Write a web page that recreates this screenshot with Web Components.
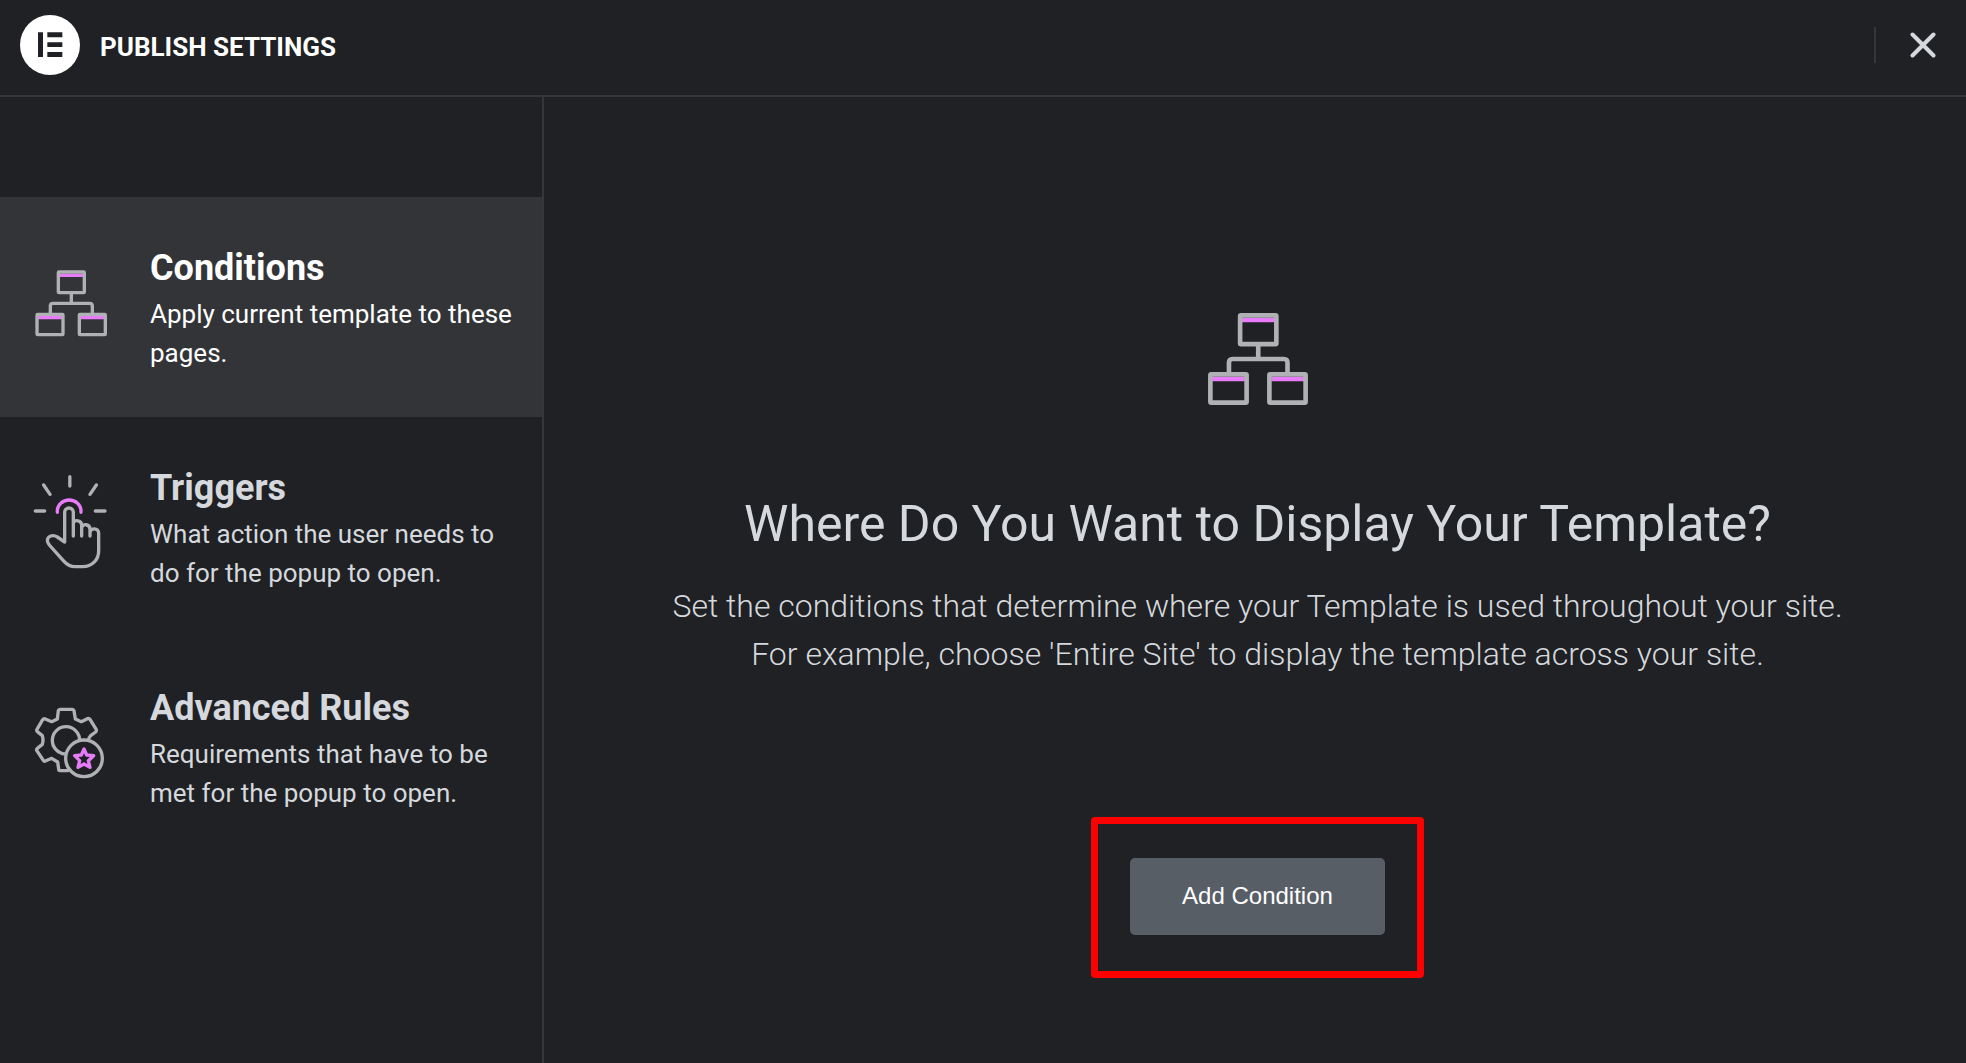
<!DOCTYPE html>
<html lang="en">
<head>
<meta charset="utf-8">
<meta name="viewport" content="width=device-width, initial-scale=1">
<title>Publish Settings</title>
<style>
  body {
    margin: 0;
    background-color: #1f2124;
    color: #d5d8dc;
    font-family: Roboto, "Liberation Sans", sans-serif;
  }
</style>
</head>
<body>

<publish-modal>
  <publish-header slot="header">Publish Settings</publish-header>

  <publish-tab slot="tabs" icon="conditions" active>
    <span slot="title">Conditions</span>
    Apply current template to these pages.
  </publish-tab>
  <publish-tab slot="tabs" icon="triggers">
    <span slot="title">Triggers</span>
    What action the user needs to do for the popup to open.
  </publish-tab>
  <publish-tab slot="tabs" icon="rules">
    <span slot="title">Advanced Rules</span>
    Requirements that have to be met for the popup to open.
  </publish-tab>

  <conditions-panel>
    <span slot="title">Where Do You Want to Display Your Template?</span>
    Set the conditions that determine where your Template is used throughout your site.
    For example, choose 'Entire Site' to display the template across your site.
    <span slot="action">Add Condition</span>
  </conditions-panel>
</publish-modal>

<script>
const conditionsShape = `
  <path class="accent square" d="M118 61H190M54 188H126M182 188H254"/>
  <rect x="115" y="51" width="78" height="62" rx="2"/>
  <rect x="51" y="178" width="78" height="61" rx="2"/>
  <rect x="178" y="178" width="78" height="61" rx="2"/>
  <path d="M154 114V145M91 176V153Q91 145 99 145H209Q217 145 217 153V176"/>
`;

const icons = {
  conditions: {
    viewBox: '0 -24 300 360',
    shape: conditionsShape
  },
  conditionsLarge: {
    viewBox: '46 46 215 198',
    shape: conditionsShape
  },
  triggers: {
    viewBox: '0 21 300 360',
    shape: `
      <path d="M149.500 50V78M71 75L90 103M229 75L210 103M46 153H74M226 153H255"/>
      <path class="accent" d="M112 157V153A35.500 33 0 0 1 183 153V157"/>
      <path d="M160 228V157A13 13 0 0 0 134 157V246L112 231C98 222 83 229 82 241C82 246 84 250 88 255L132 304C143 316 152 320 165 320H188C216 320 236 300 236 272V219C236 203 212 203 210 217V228M185 228V203C188 189 210 192 210 208V217M160 189C164 178 185 180 185 196V204"/>
    `
  },
  rules: {
    viewBox: '0 -24 300 360',
    shape: `
      <path d="M143 227H120Q116 227 116 222L113 201L95 190L76 198Q72 200 70 196L50 166Q49 162 52 160L67 148Q71 135 67 122L52 110Q49 107 51 103L68 74Q71 70 76 72L95 80L112 72L115 47Q116 43 120 43H157Q161 43 162 47L166 72L184 80L202 71Q207 69 210 73L229 104Q230 108 227 111L212 122Q207 127 205 136"/>
      <path d="M179 136A41 41 0 1 0 135 177"/>
      <circle cx="192" cy="190" r="55"/>
      <path class="accent" d="M192 162L200 180L221 182L205 197L210 217L192 207L174 217L179 197L164 182L184 180Z"/>
    `
  }
};

class PublishIcon extends HTMLElement {

  connectedCallback() {
    const { viewBox, shape } = icons[this.getAttribute('name')];

    this.attachShadow({ mode: 'open' });
    this.shadowRoot.innerHTML = `
      <style>
        :host {
          display: block;
          flex: none;
        }

        svg {
          display: block;
          width: 100%;
          height: 100%;
          fill: none;
          stroke: #afb1b4;
          stroke-width: 10;
          stroke-linecap: round;
          stroke-linejoin: round;
        }

        .accent {
          stroke: #e77bf8;
        }

        .square {
          stroke-linecap: butt;
        }
      </style>
      <svg viewBox="${viewBox}" aria-hidden="true">${shape}</svg>
    `;
  }
}

class PublishHeader extends HTMLElement {

  constructor() {
    super();
    this.attachShadow({ mode: 'open' });
    this.shadowRoot.innerHTML = `
      <style>
        :host {
          display: flex;
          align-items: flex-start;
          padding: 15px 20px 16px;
          border-bottom: 2px solid #35363a;
        }

        .logo {
          width: 60px;
          height: 60px;
          margin-right: 20px;
        }

        h1 {
          flex: 1;
          margin: 0;
          color: #fff;
          font-size: 26px;
          font-weight: 700;
          line-height: 64px;
          text-transform: uppercase;
        }

        .close {
          display: flex;
          align-items: center;
          height: 36px;
          margin-top: 12px;
          padding: 0 10px 0 34px;
          border: 0;
          border-left: 2px solid #35363a;
          background: none;
          cursor: pointer;
        }

        .close svg {
          width: 26px;
          height: 26px;
        }
      </style>

      <svg class="logo" viewBox="60 45 180 180" aria-hidden="true">
        <circle cx="150" cy="135" r="90" fill="#fff"/>
        <path fill="#1f2124" d="M114 97h15v74h-15zM142 97h45v15h-45zM142 127h45v14h-45zM142 156h45v15h-45z"/>
      </svg>
      <h1><slot></slot></h1>
      <button class="close" type="button" aria-label="Close">
        <svg viewBox="0 0 26 26" fill="none" stroke="#d5d8dc" stroke-width="4" stroke-linecap="round">
          <path d="M2.500 2.500L23.500 23.500M23.500 2.500L2.500 23.500"/>
        </svg>
      </button>
    `;
  }
}

class PublishTab extends HTMLElement {

  connectedCallback() {
    this.attachShadow({ mode: 'open' });
    this.shadowRoot.innerHTML = `
      <style>
        :host {
          display: block;
        }

        button {
          display: flex;
          align-items: center;
          gap: 30px;
          width: 100%;
          padding: 44px 20px;
          border: 0;
          background: none;
          color: inherit;
          font: inherit;
          text-align: left;
          cursor: pointer;
        }

        :host([active]) button {
          background-color: #333438;
          color: #fff;
        }

        publish-icon {
          width: 100px;
          height: 120px;
        }

        .title {
          display: block;
          font-size: 36px;
          font-weight: 700;
          line-height: 54px;
        }

        .description {
          display: block;
          font-size: 26px;
          line-height: 39px;
        }
      </style>

      <button type="button">
        <publish-icon name="${this.getAttribute('icon')}"></publish-icon>
        <span>
          <span class="title"><slot name="title"></slot></span>
          <span class="description"><slot></slot></span>
        </span>
      </button>
    `;
  }
}

class ConditionsPanel extends HTMLElement {

  constructor() {
    super();
    this.attachShadow({ mode: 'open' });
    this.shadowRoot.innerHTML = `
      <style>
        :host {
          display: flex;
          flex-direction: column;
          align-items: center;
          padding: 216px 0 40px 5px;
          text-align: center;
        }

        publish-icon {
          width: 100px;
          height: 92px;
        }

        h2 {
          margin: 89px 0 28px;
          font-size: 50px;
          font-weight: 400;
          line-height: 60px;
        }

        p {
          max-width: 1200px;
          margin: 0 0 139px;
          font-size: 32px;
          font-weight: 300;
          line-height: 48px;
        }

        .highlight {
          padding: 34px 32px 36px;
          border: 7px solid #f00;
          border-radius: 4px;
        }

        button {
          display: block;
          padding: 19px 52px 21px;
          border: 0;
          border-radius: 5px;
          background-color: #585e66;
          color: #fff;
          font-family: "Liberation Sans", Arial, sans-serif;
          font-size: 24px;
          line-height: 37px;
          cursor: pointer;
        }
      </style>

      <publish-icon name="conditionsLarge"></publish-icon>
      <h2><slot name="title"></slot></h2>
      <p><slot></slot></p>
      <div class="highlight">
        <button type="button"><slot name="action"></slot></button>
      </div>
    `;
  }
}

class PublishModal extends HTMLElement {

  constructor() {
    super();
    this.attachShadow({ mode: 'open' });
    this.shadowRoot.innerHTML = `
      <style>
        :host {
          display: flex;
          flex-direction: column;
          min-height: 100vh;
        }

        .content {
          display: grid;
          grid-template-columns: 544px 1fr;
          flex: 1;
        }

        nav {
          padding-top: 100px;
          border-right: 2px solid #35363a;
        }
      </style>

      <slot name="header"></slot>
      <div class="content">
        <nav aria-label="Publish settings"><slot name="tabs"></slot></nav>
        <main><slot></slot></main>
      </div>
    `;
  }
}

customElements.define('publish-icon', PublishIcon);
customElements.define('publish-header', PublishHeader);
customElements.define('publish-tab', PublishTab);
customElements.define('conditions-panel', ConditionsPanel);
customElements.define('publish-modal', PublishModal);
</script>
</body>
</html>
